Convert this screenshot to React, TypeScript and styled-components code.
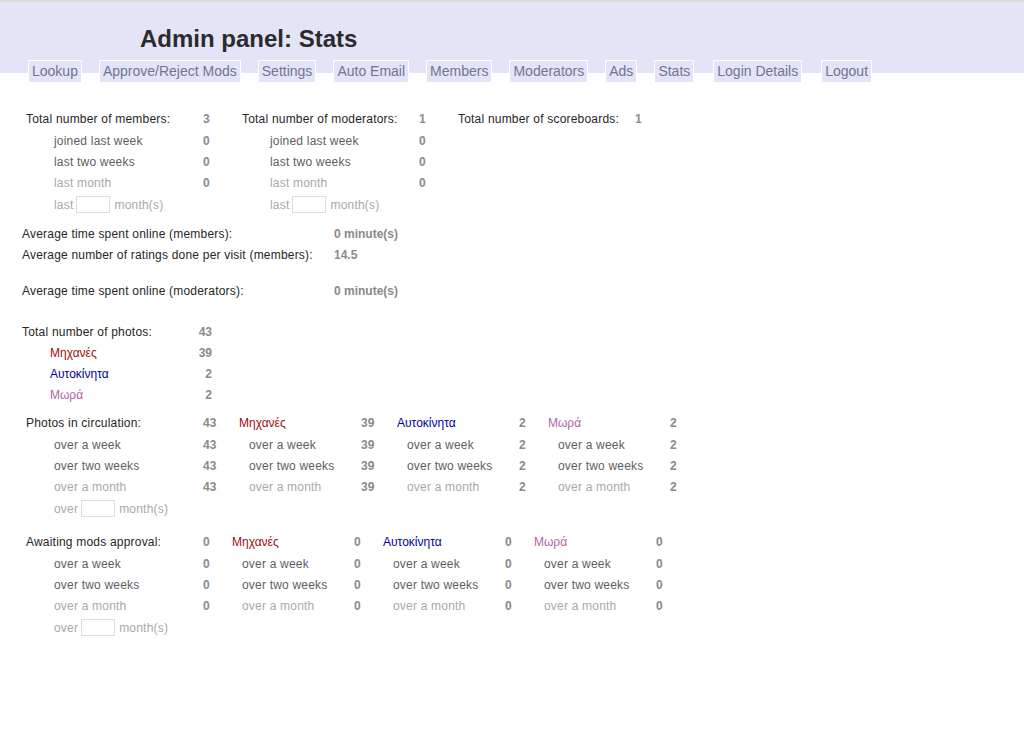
import React from "react";
import styled, { createGlobalStyle } from "styled-components";

const Global = createGlobalStyle`
  html, body { margin: 0; padding: 0; background: #ffffff; }
  body { font-family: "Liberation Sans", Arial, sans-serif; font-size: 12px; }
`;

const Page = styled.div`
  width: 1024px;
  min-height: 750px;
  background: #ffffff;
`;

const Header = styled.header`
  background: #e4e4f8;
  border-top: 2px solid #dcdad2;
  padding-top: 23px;
  display: flex;
  flex-direction: column;
`;

const Title = styled.h1`
  margin: 0 0 0 140px;
  font-size: 24px;
  line-height: 28px;
  font-weight: bold;
  color: #2b2b2b;
`;

const Tabs = styled.nav`
  display: flex;
  gap: 17px;
  margin: 7px 0 -10px 28px;
  position: relative;
`;

const Tab = styled.a<{ $extra?: number }>`
  display: block;
  height: 21px;
  line-height: 21px;
  padding: 0 3px;
  border: 1px solid #ffffff;
  background: #e4e4f8;
  color: #6f7592;
  font-size: 14px;
  text-decoration: none;
  margin-left: ${(p) => p.$extra ?? 0}px;
  white-space: nowrap;
`;

const Content = styled.main`
  padding-top: 34px;
  display: flex;
  flex-direction: column;
`;

const Blocks = styled.div`
  display: flex;
  margin-left: 26px;
`;

const StatGrid = styled.div<{ $cols: string; $rows: string; $left?: number; $mt?: number }>`
  display: grid;
  grid-template-columns: ${(p) => p.$cols};
  grid-template-rows: ${(p) => p.$rows};
  align-items: center;
  margin-left: ${(p) => p.$left ?? 0}px;
  margin-top: ${(p) => p.$mt ?? 0}px;
`;

type Tone = "main" | "sub" | "faint";
const toneColor: Record<Tone, string> = {
  main: "#262626",
  sub: "#5e5e5e",
  faint: "#a8a8a8",
};

const Label = styled.div<{ $indent?: number; $tone?: Tone; $color?: string; $span?: number }>`
  padding-left: ${(p) => p.$indent ?? 0}px;
  color: ${(p) => p.$color ?? toneColor[p.$tone ?? "main"]};
  letter-spacing: ${(p) => (p.$color ? "0" : "0.2px")};
  white-space: nowrap;
  display: flex;
  align-items: center;
  grid-column: ${(p) => (p.$span ? `span ${p.$span}` : "auto")};
`;

const Value = styled.div<{ $right?: boolean }>`
  font-weight: bold;
  color: #8a8a8a;
  text-align: ${(p) => (p.$right ? "right" : "left")};
  white-space: nowrap;
`;

const MonthsInput = styled.input`
  width: 34px;
  height: 17px;
  box-sizing: border-box;
  border: 1px solid #dedede;
  margin: 0 4px 0 3px;
  padding: 0;
  background: #fff;
`;

const Spacer = styled.div`
  grid-column: 1 / -1;
`;

const tabs: { name: string; extra?: number }[] = [
  { name: "Lookup" },
  { name: "Approve/Reject Mods" },
  { name: "Settings" },
  { name: "Auto Email" },
  { name: "Members" },
  { name: "Moderators" },
  { name: "Ads" },
  { name: "Stats" },
  { name: "Login Details", extra: 2 },
  { name: "Logout", extra: 2 },
];

const categories = [
  { name: "Μηχανές", color: "#9a0f0f", total: "39", circ: "39", wait: "0" },
  { name: "Αυτοκίνητα", color: "#000099", total: "2", circ: "2", wait: "0" },
  { name: "Μωρά", color: "#b562a6", total: "2", circ: "2", wait: "0" },
];

const overRows: { label: string; tone: Tone }[] = [
  { label: "over a week", tone: "sub" },
  { label: "over two weeks", tone: "sub" },
  { label: "over a month", tone: "faint" },
];

function MonthsRow({ word, span }: { word: string; span: number }) {
  return (
    <Label $indent={28} $tone="faint" $span={span}>
      {word}
      <MonthsInput type="text" />
      month(s)
    </Label>
  );
}

function CountBlock({ title, total }: { title: string; total: string }) {
  return (
    <StatGrid $cols="177px 39px" $rows="23px 21px 21px 21px 23px">
      <Label $tone="main">{title}</Label>
      <Value>{total}</Value>
      <Label $indent={28} $tone="sub">joined last week</Label>
      <Value>0</Value>
      <Label $indent={28} $tone="sub">last two weeks</Label>
      <Value>0</Value>
      <Label $indent={28} $tone="faint">last month</Label>
      <Value>0</Value>
      <MonthsRow word="last" span={2} />
    </StatGrid>
  );
}

function AgeTable({
  title,
  total,
  cols,
  mt,
  pick,
}: {
  title: string;
  total: string;
  cols: string;
  mt: number;
  pick: (c: (typeof categories)[number]) => string;
}) {
  return (
    <StatGrid $cols={cols} $rows="23px 21px 21px 21px 23px" $left={26} $mt={mt}>
      <Label $tone="main">{title}</Label>
      <Value>{total}</Value>
      {categories.map((c) => (
        <React.Fragment key={c.name}>
          <Label $color={c.color}>{c.name}</Label>
          <Value>{pick(c)}</Value>
        </React.Fragment>
      ))}
      {overRows.map((r) => (
        <React.Fragment key={r.label}>
          <Label $indent={28} $tone={r.tone}>{r.label}</Label>
          <Value>{total}</Value>
          {categories.map((c) => (
            <React.Fragment key={c.name}>
              <Label $indent={10} $tone={r.tone}>{r.label}</Label>
              <Value>{pick(c)}</Value>
            </React.Fragment>
          ))}
        </React.Fragment>
      ))}
      <MonthsRow word="over" span={2} />
    </StatGrid>
  );
}

export default function App() {
  return (
    <Page>
      <Global />
      <Header>
        <Title>Admin panel: Stats</Title>
        <Tabs>
          {tabs.map((t) => (
            <Tab key={t.name} href="#" $extra={t.extra}>
              {t.name}
            </Tab>
          ))}
        </Tabs>
      </Header>
      <Content>
        <Blocks>
          <CountBlock title="Total number of members:" total="3" />
          <CountBlock title="Total number of moderators:" total="1" />
          <StatGrid $cols="177px 39px" $rows="23px">
            <Label $tone="main">Total number of scoreboards:</Label>
            <Value>1</Value>
          </StatGrid>
        </Blocks>

        <StatGrid $cols="312px auto" $rows="21px 21px 15px 21px" $left={22} $mt={7}>
          <Label $tone="main">Average time spent online (members):</Label>
          <Value>0 minute(s)</Value>
          <Label $tone="main">Average number of ratings done per visit (members):</Label>
          <Value>14.5</Value>
          <Spacer />
          <Label $tone="main">Average time spent online (moderators):</Label>
          <Value>0 minute(s)</Value>
        </StatGrid>

        <StatGrid $cols="160px 30px" $rows="21px 21px 21px 21px" $left={22} $mt={20}>
          <Label $tone="main">Total number of photos:</Label>
          <Value $right>43</Value>
          {categories.map((c) => (
            <React.Fragment key={c.name}>
              <Label $indent={28} $color={c.color}>{c.name}</Label>
              <Value $right>{c.total}</Value>
            </React.Fragment>
          ))}
        </StatGrid>

        <AgeTable
          title="Photos in circulation:"
          total="43"
          cols="177px 36px 122px 36px 122px 29px 122px 29px"
          mt={6}
          pick={(c) => c.circ}
        />

        <AgeTable
          title="Awaiting mods approval:"
          total="0"
          cols="177px 29px 122px 29px 122px 29px 122px 29px"
          mt={10}
          pick={(c) => c.wait}
        />
      </Content>
    </Page>
  );
}
